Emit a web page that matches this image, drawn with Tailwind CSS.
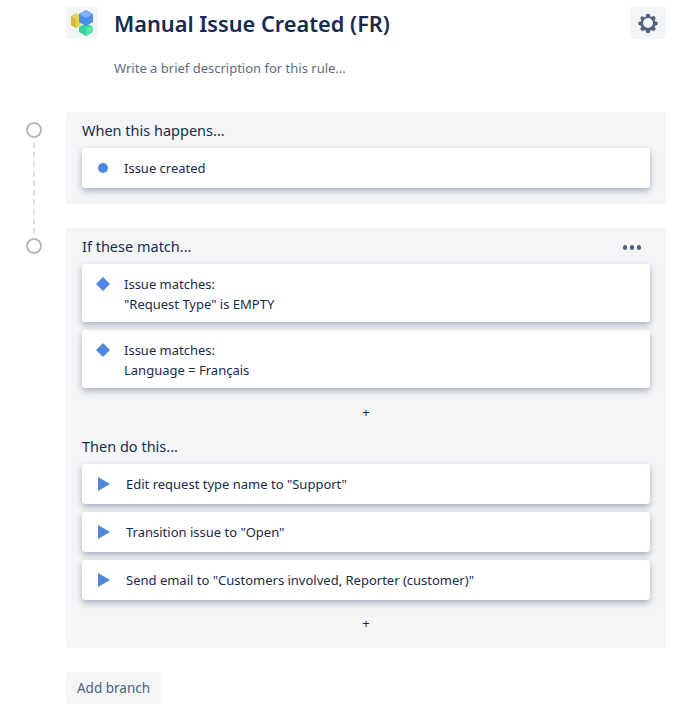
<!DOCTYPE html>
<html lang="en">
<head>
    <meta charset="UTF-8">
    <meta name="viewport" content="width=device-width, initial-scale=1.0">
    <title>Manual Issue Created (FR)</title>
    <script src="https://cdn.jsdelivr.net/npm/@tailwindcss/browser@4"></script>
</head>
<body class="bg-white font-['Noto_Sans','Open_Sans',sans-serif] text-[#172b4d] overflow-hidden">
    <div class="flex w-[674px] h-[717px]">
        <!-- timeline -->
        <div class="w-[66px] pl-[26px] pt-[122px] flex flex-col shrink-0">
            <div class="w-4 h-4 rounded-full border-2 border-[#b3bac5] bg-white"></div>
            <div class="ml-[7px] h-[92px] my-[4px] border-l-2 border-dashed border-[#dfe1e6]"></div>
            <div class="w-4 h-4 rounded-full border-2 border-[#b3bac5] bg-white"></div>
        </div>

        <div class="w-[600px] pt-[7px]">
            <!-- header -->
            <div class="flex items-center h-8">
                <div class="w-8 h-8 rounded-[3px] bg-[#f4f5f7]">
                    <svg width="32" height="32" viewBox="0 0 32 32">
                        <path d="M5 9 L10 6 L15 9 L15 18 L10 21 L5 18 Z" fill="#e8d05a"/>
                        <path d="M5 9 L10 12 L10 21 L5 18 Z" fill="#dcb92c"/>
                        <path d="M13 20 L20 16 L27 20 L27 25 L20 29 L13 25 Z" fill="#36d39a"/>
                        <path d="M20 20 L27 20 L27 25 L20 29 Z" fill="#57e6ab"/>
                        <path d="M13 7 L20 3 L27 7 L27 15 L20 19 L13 15 Z" fill="#4a8fe8"/>
                        <path d="M13 7 L20 3 L27 7 L20 11 Z" fill="#7fb2f0"/>
                    </svg>
                </div>
                <h1 class="ml-4 pt-[2px] text-[21.75px] font-semibold leading-8">Manual Issue Created (FR)</h1>
                <button class="ml-auto w-9 h-8 rounded-[3px] bg-[#f4f5f7] flex items-center justify-center">
                    <svg width="24" height="24" viewBox="0 0 24 24" fill="#505f79">
                        <path fill-rule="evenodd" d="M11 3h2a1 1 0 0 1 1 .8l.3 1.6 1.3.6 1.4-.9a1 1 0 0 1 1.3.1l1.1 1.2a1 1 0 0 1 .1 1.3l-.9 1.4.6 1.3 1.6.3a1 1 0 0 1 .8 1v1.6a1 1 0 0 1-.8 1l-1.6.3-.6 1.3.9 1.4a1 1 0 0 1-.1 1.3l-1.1 1.1a1 1 0 0 1-1.3.1l-1.4-.9-1.3.6-.3 1.6a1 1 0 0 1-1 .8h-2a1 1 0 0 1-1-.8l-.3-1.6-1.3-.6-1.4.9a1 1 0 0 1-1.3-.1l-1.1-1.1a1 1 0 0 1-.1-1.3l.9-1.4-.6-1.3-1.6-.3a1 1 0 0 1-.8-1v-1.6a1 1 0 0 1 .8-1l1.6-.3.6-1.3-.9-1.4a1 1 0 0 1 .1-1.3L5.7 5.6A1 1 0 0 1 7 5.5l1.4.9L9.7 5.8l.3-1.9A1 1 0 0 1 11 3zm1 4a5 5 0 1 0 0 10 5 5 0 0 0 0-10z"/>
                    </svg>
                </button>
            </div>
            <p class="ml-12 mt-[19px] text-[13px] leading-5 text-[#5e6c84]">Write a brief description for this rule...</p>

            <!-- trigger -->
            <section class="mt-[34px] h-[92px] rounded-[3px] bg-[#f4f5f7] px-4 pt-2">
                <h2 class="text-[14.5px] leading-5">When this happens...</h2>
                <div class="mt-2 h-10 rounded-[3px] bg-white shadow-[0_3px_6px_rgba(9,30,66,0.32)] flex items-center text-[13px]">
                    <span class="ml-4 mr-[16px] w-2.5 h-2.5 rounded-full bg-[#4f86e0]"></span>
                    <span class="pt-[2px]">Issue created</span>
                </div>
            </section>

            <!-- conditions + actions -->
            <section class="mt-6 h-[420px] rounded-[3px] bg-[#f4f5f7] px-4 pt-2">
                <div class="flex items-center justify-between">
                    <h2 class="text-[14.5px] leading-5">If these match...</h2>
                    <div class="flex gap-[2.5px] mr-[9px] mt-[3px]">
                        <span class="w-[4.5px] h-[4.5px] rounded-full bg-[#505f79]"></span>
                        <span class="w-[4.5px] h-[4.5px] rounded-full bg-[#505f79]"></span>
                        <span class="w-[4.5px] h-[4.5px] rounded-full bg-[#505f79]"></span>
                    </div>
                </div>
                <div class="mt-2 flex flex-col gap-2">
                    <div class="h-[58px] rounded-[3px] bg-white shadow-[0_3px_6px_rgba(9,30,66,0.32)] flex text-[13px] leading-5 pt-[10px]">
                        <svg class="ml-[14px] mr-[14px] mt-[3px]" width="14" height="14" viewBox="0 0 14 14"><path d="M7 0 L14 7 L7 14 L0 7 Z" fill="#4f86e0"/></svg>
                        <div>Issue matches:<br>"Request Type" is EMPTY</div>
                    </div>
                    <div class="h-[58px] rounded-[3px] bg-white shadow-[0_3px_6px_rgba(9,30,66,0.32)] flex text-[13px] leading-5 pt-[10px]">
                        <svg class="ml-[14px] mr-[14px] mt-[3px]" width="14" height="14" viewBox="0 0 14 14"><path d="M7 0 L14 7 L7 14 L0 7 Z" fill="#4f86e0"/></svg>
                        <div>Issue matches:<br>Language = Français</div>
                    </div>
                </div>
                <div class="h-12 flex items-center justify-center text-[13px] pt-[2px]">+</div>
                <h2 class="text-[14.5px] leading-5">Then do this...</h2>
                <div class="mt-2 flex flex-col gap-2">
                    <div class="h-10 rounded-[3px] bg-white shadow-[0_3px_6px_rgba(9,30,66,0.32)] flex items-center text-[13px]">
                        <svg class="ml-4 mr-[16px]" width="12" height="14" viewBox="0 0 12 14"><path d="M0 0 L12 7 L0 14 Z" fill="#4f86e0"/></svg>
                        <span class="pt-[2px]">Edit request type name to "Support"</span>
                    </div>
                    <div class="h-10 rounded-[3px] bg-white shadow-[0_3px_6px_rgba(9,30,66,0.32)] flex items-center text-[13px]">
                        <svg class="ml-4 mr-[16px]" width="12" height="14" viewBox="0 0 12 14"><path d="M0 0 L12 7 L0 14 Z" fill="#4f86e0"/></svg>
                        <span class="pt-[2px]">Transition issue to "Open"</span>
                    </div>
                    <div class="h-10 rounded-[3px] bg-white shadow-[0_3px_6px_rgba(9,30,66,0.32)] flex items-center text-[13px]">
                        <svg class="ml-4 mr-[16px]" width="12" height="14" viewBox="0 0 12 14"><path d="M0 0 L12 7 L0 14 Z" fill="#4f86e0"/></svg>
                        <span class="pt-[2px]">Send email to "Customers involved, Reporter (customer)"</span>
                    </div>
                </div>
                <div class="h-12 flex items-center justify-center text-[13px]">+</div>
            </section>

            <button class="mt-6 w-[95px] h-8 rounded-[3px] bg-[#f4f5f7] text-[13.5px] text-[#505f79] pt-[1px]">Add branch</button>
        </div>
    </div>
</body>
</html>
